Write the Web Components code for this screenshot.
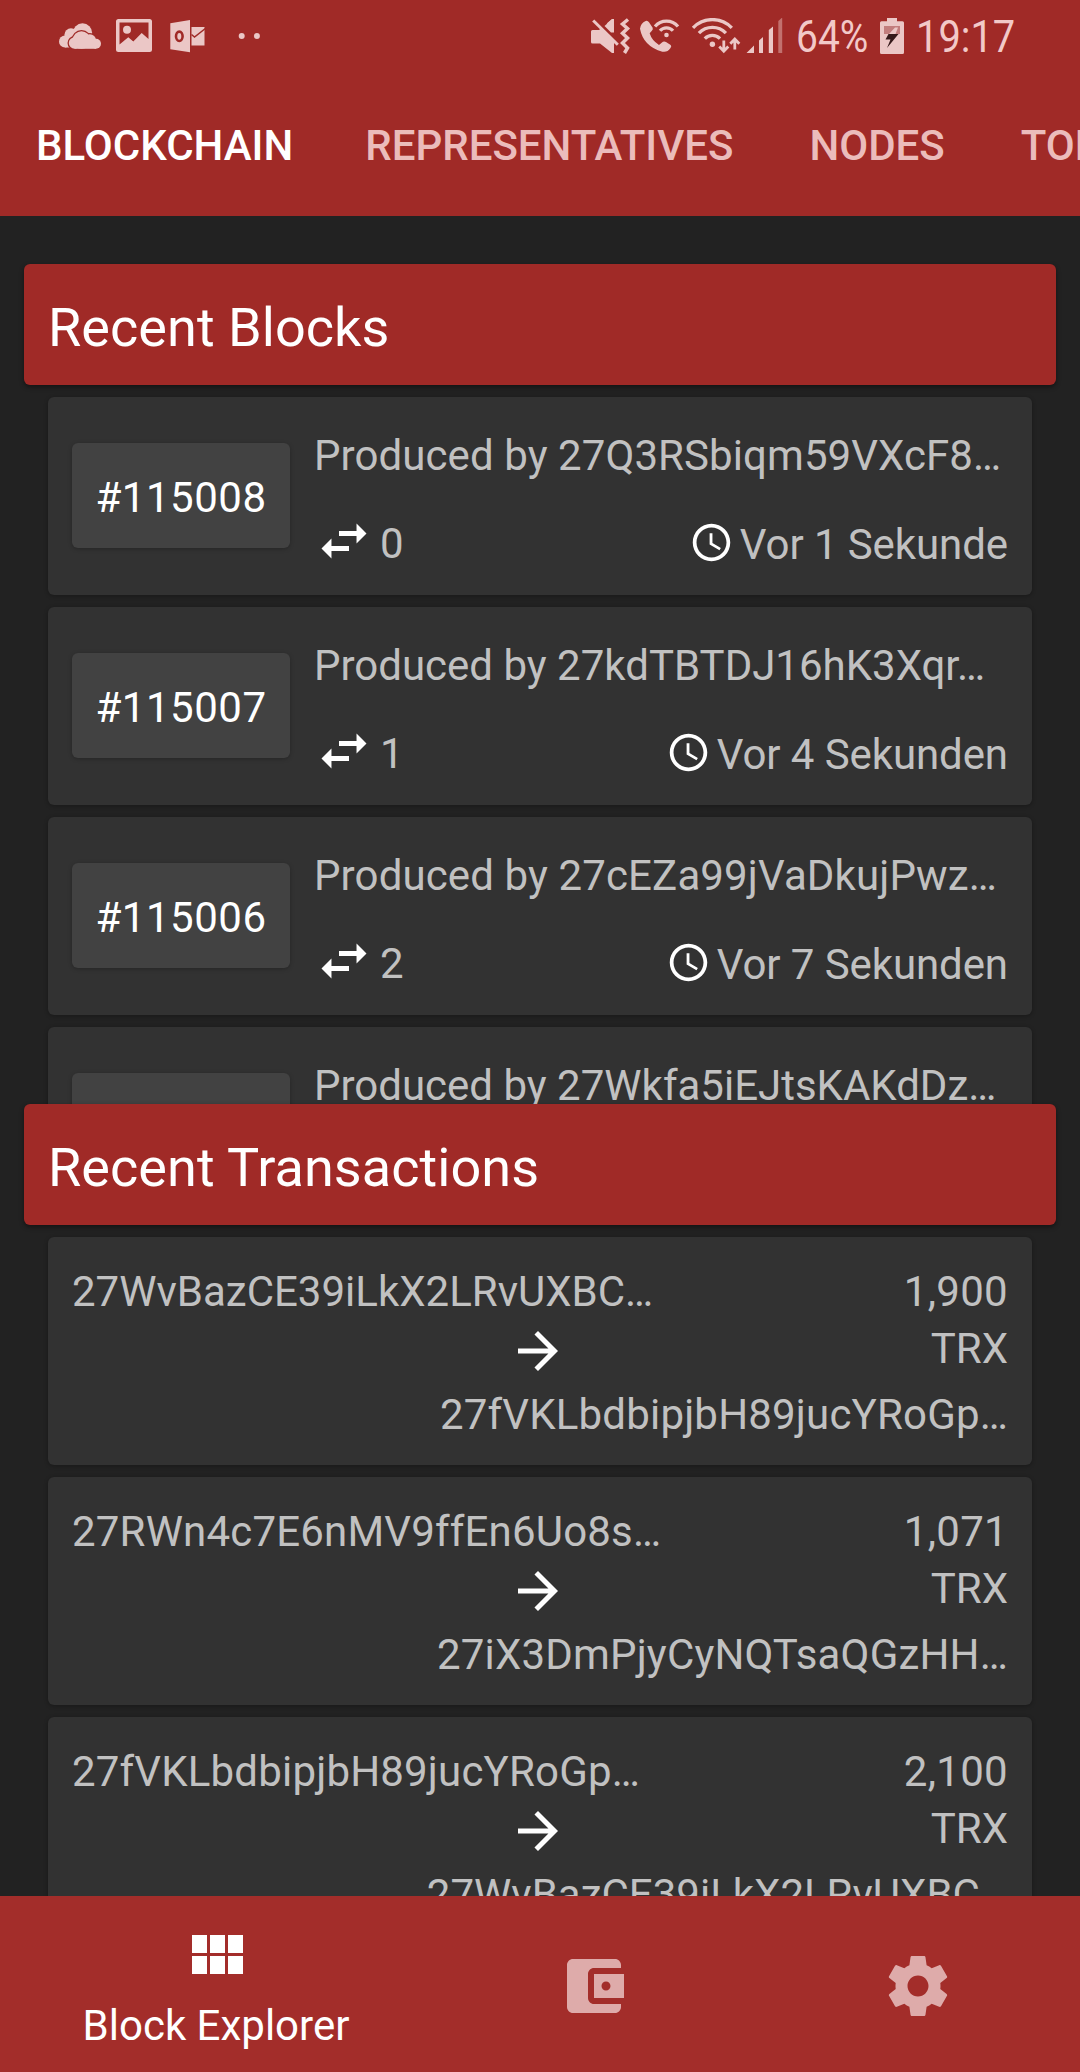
<!DOCTYPE html>
<html lang="de">
<head>
<meta charset="utf-8">
<title>Block Explorer</title>
<style>
html,body{margin:0;padding:0}
body{width:1080px;height:2072px;overflow:hidden;background:#222;font-family:Roboto,"Noto Sans",sans-serif;font-size:42px;color:#c1c1c1}
</style>
</head>
<body>
<explorer-app></explorer-app>
<script>
const define = (name, html) => {
  const t = document.createElement('template');
  t.innerHTML = html;
  customElements.define(name, class extends HTMLElement {
    constructor() {
      super();
      this.attachShadow({mode: 'open'}).append(t.content.cloneNode(true));
    }
  });
};

/* ---------- status bar ---------- */
define('status-bar', `
<style>
:host{display:flex;height:72px;box-sizing:border-box;padding:18px 64px 0 58px;color:#f2c9c8;--c:#ebc7c6;--r:#a02a27}
svg{display:block;height:38px;flex:none}
.right{display:flex;margin-left:auto}
.t{height:38px;line-height:38px;font-size:45px;white-space:nowrap}
.t span{display:inline-block;transform-origin:0 50%;transform:scaleX(.865)}
</style>
<svg width="44" viewBox="58 18 44 38" fill="var(--c)">
  <circle cx="65" cy="41.500" r="6"/><circle cx="71" cy="34.800" r="6.600"/><circle cx="82.500" cy="33" r="9.700"/><path d="M65 40h15v7.500H65Z"/>
  <g stroke="var(--r)" stroke-width="2.600"><circle cx="74.600" cy="43" r="5.800"/><circle cx="81.500" cy="40" r="8.700"/><circle cx="89.800" cy="40.500" r="6.200"/><circle cx="96" cy="43.800" r="5"/></g>
  <circle cx="74.600" cy="43" r="5.800"/><circle cx="81.500" cy="40" r="8.700"/><circle cx="89.800" cy="40.500" r="6.200"/><circle cx="96" cy="43.800" r="5"/><path d="M74.600 40H96v8.800H74.600Z"/>
</svg>
<svg width="38" viewBox="115 18 38 38" fill="var(--c)" style="margin-left:13px">
  <path fill-rule="evenodd" d="M118.500 19h31a2.500 2.500 0 0 1 2.500 2.500v28a2.500 2.500 0 0 1-2.500 2.500h-31a2.500 2.500 0 0 1-2.500-2.500v-28a2.500 2.500 0 0 1 2.500-2.500ZM119.500 22.500V44.500L128.300 37.300 133.300 41.500 141.700 33 148.500 39V22.500Z"/>
  <circle cx="127" cy="29.800" r="4"/>
</svg>
<svg width="38" viewBox="169 18 38 38" fill="var(--c)" style="margin-left:16px">
  <path d="M170.300 23.200 190 20V52.200L170.300 49.300Z"/>
  <ellipse cx="179.300" cy="36.300" rx="3.300" ry="4.700" fill="none" stroke="var(--r)" stroke-width="2.600"/>
  <path d="M191.500 27H204.500v18.500H191.500Z"/>
  <path d="M191.500 34.500 194.500 37 206 28" fill="none" stroke="var(--r)" stroke-width="1.500"/>
</svg>
<svg width="26" viewBox="237 18 26 38" fill="var(--c)" style="margin-left:30px">
  <circle cx="241.700" cy="36" r="3"/><circle cx="256.900" cy="36" r="3"/>
</svg>
<div class="right">
  <svg width="41" viewBox="590 18 41 38" fill="var(--c)">
    <path d="M591 31.500a1.500 1.500 0 0 1 1.500-1.500H599L612 19H614V53H612L600 43.500H592.500a1.500 1.500 0 0 1-1.500-1.500Z"/>
    <path d="M593.500 15.500 620 41.500" fill="none" stroke="var(--r)" stroke-width="7.500"/>
    <path d="M619.500 46.200 614 40.700V48Z" fill="var(--r)"/>
    <path d="M593.200 20.500 617.800 44.800" fill="none" stroke="var(--c)" stroke-width="3"/>
    <path d="M604.500 26 612 19.200H614V32.500L611 32.500Z"/>
    <path d="M628 19.500 622.500 24 627.500 28.500 622.500 33.300 627.500 38 622.500 43 627.500 48 624.500 53" fill="none" stroke="var(--c)" stroke-width="3.500"/>
  </svg>
  <svg width="42" viewBox="639 18 42 38" fill="var(--c)" style="margin-left:8px">
    <path transform="translate(585 12) scale(.33333)" d="M165 50Q167 34 182 27Q188 25 192 31L203 47Q205 52 200 57L194 64Q200 85 222 99L230 92Q236 87 243 90L257 99Q261 103 256 109Q247 122 232 119Q175 103 165 50Z"/>
    <circle cx="666.500" cy="35" r="2.300"/>
    <g fill="none" stroke="var(--c)" stroke-width="3.200"><path d="M660 30.800a8.500 8.500 0 0 1 13 0M655 26.500a15 15 0 0 1 23 0"/></g>
  </svg>
  <svg width="50" viewBox="691 18 50 38" fill="var(--c)" style="margin-left:10px">
    <circle cx="712.400" cy="44.300" r="2.700"/>
    <g fill="none" stroke="var(--c)" stroke-width="3.300">
      <path d="M693 27.800a27 27 0 0 1 38.800 0M698.900 33.200a18.600 18.600 0 0 1 27 0M704.800 38.600a10.500 10.500 0 0 1 15.200 0"/>
      <path stroke-width="2.800" d="M723.800 40.500V50M719.300 46.500 723.800 51.300 728.300 46.500M734.800 49.500V39.500M730.300 43.800 734.800 39 739.300 43.800"/>
    </g>
  </svg>
  <svg width="38" viewBox="745 18 38 38" fill="var(--c)" style="margin-left:4px">
    <path d="M746.500 53 754 45.500V53ZM759 53V40.500L763 37V53ZM768.800 53V30L773 26.500V53Z"/>
    <path opacity=".45" d="M778.300 53V21L782.200 17.500V53Z"/>
  </svg>
  <div class="t" style="width:82px;margin-left:13px;"><span>64%</span></div>
  <svg width="26" viewBox="879 18 26 38" fill="var(--c)" style="margin-left:1px">
    <path d="M887 18h10v3.300h5.500a1.500 1.500 0 0 1 1.500 1.500v29.700a1.500 1.500 0 0 1-1.500 1.500h-21a1.500 1.500 0 0 1-1.500-1.500v-29.700a1.500 1.500 0 0 1 1.500-1.500h5.500Z"/>
    <path fill="#c27d7d" d="M884 26h16v8H884Z"/>
    <path d="M895 27.500 889 34h6.500L898 27.500Z"/>
    <path fill="#35191a" d="M888.500 34H898.500L887 48 890.500 39.500H885.500Z"/>
  </svg>
  <div class="t" style="width:100px;margin-left:11px"><span style="transform:scaleX(.885)">19:17</span></div>
</div>`);

/* ---------- top tabs ---------- */
define('top-tabs', `
<style>:host{display:flex;height:144px;box-sizing:border-box;padding:49px 0 0 36px;gap:72px;overflow:hidden;white-space:nowrap}</style>
<slot></slot>`);
define('top-tab', `
<style>:host{display:block;flex:none;font-size:42px;line-height:50px;font-weight:500;color:#ebbcbb}:host([active]){color:#fff}:host(:nth-child(n+3)){margin-left:4px}</style>
<slot></slot>`);

/* ---------- sections ---------- */
define('section-title', `
<style>:host{display:block;height:121px;box-sizing:border-box;margin:0 24px;padding:31px 24px 0;border-radius:6px;background:#a02a27;color:#fff;font-size:54px;letter-spacing:.05px;line-height:65px;box-shadow:0 2px 5px rgba(0,0,0,.45);position:relative;white-space:nowrap}</style>
<slot></slot>`);
define('card-list', `
<style>:host{display:flex;flex-direction:column;gap:12px;overflow:hidden;box-sizing:border-box;padding:12px 48px 0}</style>
<slot></slot>`);

define('block-card', `
<style>
:host{display:flex;flex:none;gap:24px;height:198px;box-sizing:border-box;padding:24px;background:#323232;border-radius:6px;box-shadow:0 1px 4px rgba(0,0,0,.3);white-space:nowrap}
.chip{align-self:center;width:218px;height:105px;flex:none;box-sizing:border-box;margin-bottom:2px;padding:26px 0 0;text-align:center;line-height:57px;letter-spacing:.5px;color:#fff;background:#424242;border-radius:6px;box-shadow:0 1px 4px rgba(0,0,0,.25)}
.col{flex:1;display:flex;flex-direction:column;justify-content:space-between;padding-top:6px}
.by{line-height:57px}
.row{display:flex;height:60px}
.n{line-height:65px;margin-left:6px}
.when{line-height:67px;margin-left:6px;letter-spacing:-.08px}
svg{display:block;flex:none}
.clock{margin:9px 0 0 auto}
</style>
<div class="chip"><slot name="id"></slot></div>
<div class="col">
  <div class="by"><slot name="by"></slot></div>
  <div class="row">
    <svg width="60" height="60" viewBox="0 0 24 24" fill="#fff"><path d="M6.990 11 3 15l3.990 4v-3H14v-2H6.990v-3zM21 9l-3.990-4v3H10v2h7.010v3L21 9z"/></svg>
    <div class="n"><slot name="count"></slot></div>
    <svg class="clock" width="45" height="45" viewBox="0 0 24 24" fill="#fff"><path d="M11.990 2C6.470 2 2 6.480 2 12s4.470 10 9.990 10C17.520 22 22 17.520 22 12S17.520 2 11.990 2zM12 20c-4.420 0-8-3.580-8-8s3.580-8 8-8 8 3.580 8 8-3.580 8-8 8zm.5-13H11v6l5.250 3.150.75-1.230-4.500-2.670z"/></svg>
    <div class="when"><slot name="when"></slot></div>
  </div>
</div>`);

define('transfer-card', `
<style>
:host{display:grid;flex:none;grid-template:60px 60px 60px / 1fr auto;height:228px;box-sizing:border-box;padding:24px;background:#323232;border-radius:6px;box-shadow:0 1px 4px rgba(0,0,0,.3);white-space:nowrap}
.from{grid-area:1/1;line-height:61px}
.amt{grid-area:1/2/3/3;text-align:right;padding-top:2px;line-height:57px;display:flex;flex-direction:column}
.amt slot{letter-spacing:.3px}
svg{grid-area:2/1/3/3;justify-self:center;margin-right:4px}
.to{grid-area:3/1/4/3;text-align:right;line-height:67px}
</style>
<div class="from"><slot name="from"></slot></div>
<div class="amt"><slot name="amount"></slot><span>TRX</span></div>
<svg width="60" height="60" viewBox="0 0 24 24" fill="#fff"><path d="M12 4l-1.410 1.410L16.170 11H4v2h12.170l-5.580 5.590L12 20l8-8z"/></svg>
<div class="to"><slot name="to"></slot></div>`);

/* ---------- bottom navigation ---------- */
define('bottom-nav', `
<style>
:host{display:grid;grid-template-columns:432px 324px 324px;height:176px;flex:none;background:#a32d2a;position:relative;color:#deabaa}
div{display:flex;flex-direction:column;align-items:center;padding-top:54px}
.on{padding-top:24px;color:#fff}
svg{display:block;fill:currentColor}
span{line-height:57px;margin-top:5px;white-space:nowrap}
</style>
<div class="on"><svg width="72" height="72" viewBox="0 0 24 24"><path d="M4 11h5V5H4v6zm0 7h5v-6H4v6zm6 0h5v-6h-5v6zm6 0h5v-6h-5v6zm-6-7h5V5h-5v6zm6-6v6h5V5h-5z"/></svg><span>Block Explorer</span></div>
<div><svg width="72" height="72" viewBox="0 0 24 24"><path d="M21 18v1c0 1.100-.9 2-2 2H5c-1.110 0-2-.9-2-2V5c0-1.100.89-2 2-2h14c1.100 0 2 .9 2 2v1h-9c-1.110 0-2 .9-2 2v8c0 1.100.89 2 2 2h9zm-9-2h10V8H12v8zm4-2.500c-.83 0-1.500-.67-1.500-1.500s.67-1.500 1.500-1.500 1.500.67 1.500 1.500-.67 1.500-1.500 1.500z"/></svg></div>
<div><svg width="72" height="72" viewBox="0 0 24 24"><path d="M19.430 12.980c.04-.32.07-.64.07-.98s-.03-.66-.07-.98l2.110-1.650c.19-.15.24-.42.12-.64l-2-3.460c-.12-.22-.39-.3-.61-.22l-2.490 1c-.52-.4-1.080-.73-1.690-.98l-.38-2.650C14.460 2.180 14.250 2 14 2h-4c-.25 0-.46.18-.49.42l-.38 2.650c-.61.25-1.170.59-1.690.98l-2.490-1c-.23-.09-.49 0-.61.22l-2 3.460c-.13.22-.07.49.12.64l2.110 1.650c-.04.32-.07.65-.07.98s.03.66.07.98l-2.110 1.650c-.19.15-.24.42-.12.64l2 3.460c.12.22.39.3.61.22l2.490-1c.52.4 1.080.73 1.690.98l.38 2.650c.03.24.24.42.49.42h4c.25 0 .46-.18.49-.42l.38-2.650c.61-.25 1.170-.59 1.690-.98l2.490 1c.23.09.49 0 .61-.22l2-3.460c.12-.22.07-.49-.12-.64l-2.110-1.650zM12 15.500c-1.930 0-3.500-1.570-3.500-3.500s1.570-3.500 3.500-3.500 3.500 1.570 3.500 3.500-1.570 3.500-3.500 3.500z"/></svg></div>`);

define('explorer-app', `
<style>
:host{display:flex;flex-direction:column;width:1080px;height:2072px;overflow:hidden}
header{background:#a02a27;height:216px;flex:none}
main{flex:1;min-height:0;display:flex;flex-direction:column;padding-top:48px;overflow:hidden}
section-title{flex:none}
.blocks{height:719px;flex:none}
.txs{flex:1;min-height:0}
.w1{letter-spacing:.08px}
.w2{letter-spacing:.12px}
.w3{letter-spacing:.18px}
</style>
<header>
  <status-bar></status-bar>
  <top-tabs><top-tab active>BLOCKCHAIN</top-tab><top-tab>REPRESENTATIVES</top-tab><top-tab>NODES</top-tab><top-tab>TOKENS</top-tab></top-tabs>
</header>
<main>
  <section-title>Recent Blocks</section-title>
  <card-list class="blocks">
    <block-card><span slot="id">#115008</span><span slot="by" class="w1">Produced by 27Q3RSbiqm59VXcF8…</span><span slot="count">0</span><span slot="when">Vor 1 Sekunde</span></block-card>
    <block-card><span slot="id">#115007</span><span slot="by">Produced by 27kdTBTDJ16hK3Xqr…</span><span slot="count">1</span><span slot="when">Vor 4 Sekunden</span></block-card>
    <block-card><span slot="id">#115006</span><span slot="by" class="w2">Produced by 27cEZa99jVaDkujPwz…</span><span slot="count">2</span><span slot="when">Vor 7 Sekunden</span></block-card>
    <block-card><span slot="by">Produced by 27Wkfa5iEJtsKAKdDz…</span></block-card>
  </card-list>
  <section-title>Recent Transactions</section-title>
  <card-list class="txs">
    <transfer-card><span slot="from">27WvBazCE39iLkX2LRvUXBC…</span><span slot="amount">1,900</span><span slot="to" class="w3">27fVKLbdbipjbH89jucYRoGp…</span></transfer-card>
    <transfer-card><span slot="from" class="w3">27RWn4c7E6nMV9ffEn6Uo8s…</span><span slot="amount">1,071</span><span slot="to" class="w3">27iX3DmPjyCyNQTsaQGzHH…</span></transfer-card>
    <transfer-card><span slot="from" class="w3">27fVKLbdbipjbH89jucYRoGp…</span><span slot="amount">2,100</span><span slot="to">27WvBazCE39iLkX2LRvUXBC…</span></transfer-card>
  </card-list>
</main>
<bottom-nav></bottom-nav>`);
</script>
</body>
</html>
